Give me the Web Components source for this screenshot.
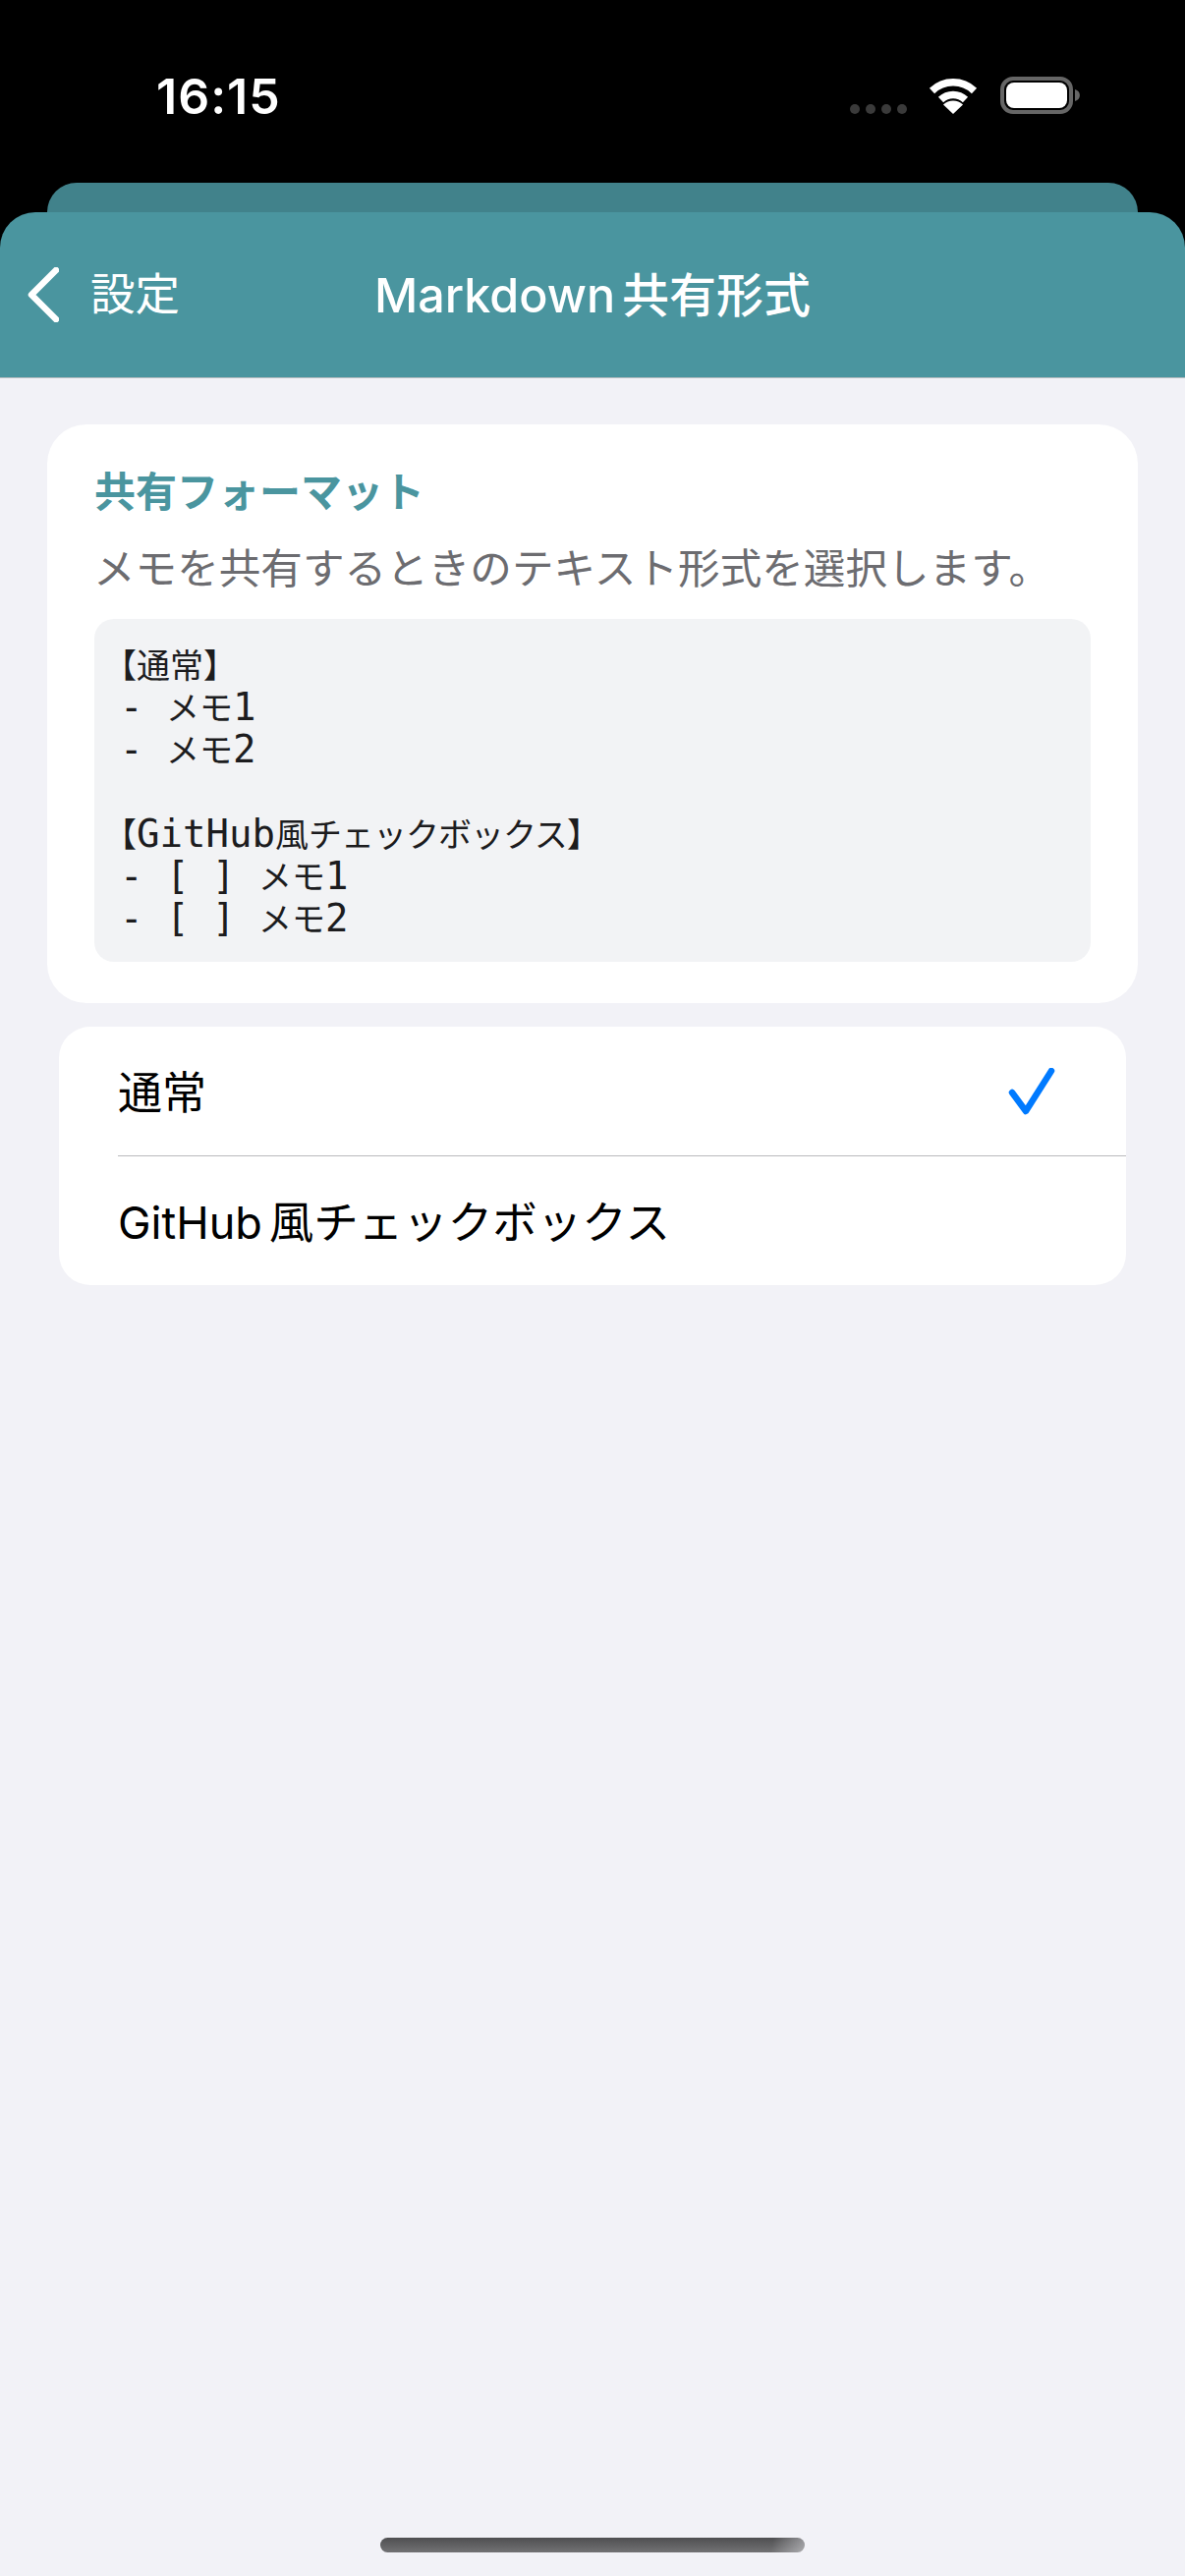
<!DOCTYPE html>
<html lang="ja">
<head>
<meta charset="utf-8">
<title>Markdown共有形式</title>
<style>
  html, body { margin: 0; padding: 0; background: #000; }
  body { font-family: "Inter", "Noto Sans CJK JP", sans-serif; }
</style>
</head>
<body>
<app-screen>
  <status-bar time="16:15"></status-bar>
  <nav-header back="設定" title="Markdown" suffix="共有形式"></nav-header>
  <format-card heading="共有フォーマット" note="メモを共有するときのテキスト形式を選択します。"></format-card>
  <option-list>
    <option-row label="通常" checked></option-row>
    <option-row label="GitHub" suffix="風チェックボックス"></option-row>
  </option-list>
</app-screen>

<script>
class AppScreen extends HTMLElement {
  constructor() {
    super();
    this.attachShadow({ mode: "open" });
    this.shadowRoot.innerHTML = `
      <style>
        :host { display: flex; flex-direction: column; width: 1206px; height: 2622px; background: #000; overflow: hidden; }
        .content { flex: 1; display: flex; flex-direction: column; background: #f2f2f7; }
        .main { flex: 1; }
        .home { align-self: center; width: 432px; height: 15px; margin-bottom: 24px; border-radius: 8px;
          background: linear-gradient(100deg, transparent 92%, rgba(242,242,247,.45) 100%), linear-gradient(#4f4f51, #727274); }
      </style>
      <slot name="top"></slot>
      <div class="content">
        <div class="main"><slot></slot></div>
        <div class="home"></div>
      </div>
    `;
  }

  connectedCallback() {
    [...this.children].forEach((el) => {
      if (el.localName === "status-bar" || el.localName === "nav-header") el.slot = "top";
    });
  }
}

class StatusBar extends HTMLElement {
  constructor() {
    super();
    this.attachShadow({ mode: "open" });
  }

  connectedCallback() {
    this.shadowRoot.innerHTML = `
      <style>
        :host { display: block; height: 186px; }
        .bar { display: flex; align-items: flex-start; height: 100%; padding: 0 106px 0 159px; }
        .time { font: 600 50px/58px "Inter", sans-serif; color: #fff; margin-top: 69px; letter-spacing: 1px; }
        .right { display: flex; align-items: flex-start; margin-left: auto; margin-top: 78px; }
        .dots { display: flex; gap: 6px; margin-top: 28px; margin-right: 22px; }
        .dots i { width: 10px; height: 10px; border-radius: 50%; background: #3a3a3a; }
        svg { display: block; }
        .wifi { margin-right: 23px; }
      </style>
      <div class="bar">
        <span class="time">${this.getAttribute("time")}</span>
        <div class="right">
          <div class="dots"><i></i><i></i><i></i><i></i></div>
          <svg class="wifi" width="50" height="38" viewBox="0 0 50 38">
            <path d="M3.5 14.5a31 31 0 0 1 43 0" fill="none" stroke="#fff" stroke-width="7.5"/>
            <path d="M12.5 23.5a18 18 0 0 1 25 0" fill="none" stroke="#fff" stroke-width="7.5"/>
            <path d="M25 38 L15 28.5a14.5 14.5 0 0 1 20 0Z" fill="#fff"/>
          </svg>
          <svg width="82" height="38" viewBox="0 0 82 38">
            <rect x="2" y="2" width="70" height="34" rx="11" fill="none" stroke="#666" stroke-width="4"/>
            <rect x="6" y="6" width="62" height="26" rx="8" fill="#fff"/>
            <path d="M76 13a8 6.500 0 0 1 0 12Z" fill="#666"/>
          </svg>
        </div>
      </div>
    `;
  }
}

class NavHeader extends HTMLElement {
  constructor() {
    super();
    this.attachShadow({ mode: "open" });
  }

  connectedCallback() {
    this.shadowRoot.innerHTML = `
      <style>
        :host { display: block; color: #fff; }
        .sheet { height: 30px; margin: 0 48px; background: #41828b; border-radius: 34px 34px 0 0; }
        .nav { position: relative; display: flex; align-items: center; justify-content: center; height: 168px;
          background: #4a959f; border-radius: 36px 36px 0 0; border-bottom: 1px solid #b4bcbf; }
        .back { position: absolute; top: 56px; left: 28px; display: flex; align-items: center; gap: 32px; font-size: 45.500px; line-height: 56px; }
        .title { font-size: 48.500px; font-weight: 500; line-height: 56px; margin-top: 2px; white-space: nowrap; }
        .title span { margin-left: 7px; font-size: 48px; }
        svg { display: block; }
      </style>
      <div class="sheet"></div>
      <div class="nav">
        <div class="back">
          <svg width="32" height="56" viewBox="0 0 32 56"><path d="M29 3 L4 28 L29 53" fill="none" stroke="#fff" stroke-width="6.500" stroke-linecap="round" stroke-linejoin="round"/></svg>
          <span>${this.getAttribute("back")}</span>
        </div>
        <div class="title">${this.getAttribute("title")}<span>${this.getAttribute("suffix")}</span></div>
      </div>
    `;
  }
}

class FormatCard extends HTMLElement {
  constructor() {
    super();
    this.attachShadow({ mode: "open" });
  }

  connectedCallback() {
    // kana and kanji run narrower than the latin cell in the reference, so they get their own spans
    const lines = [
      `<i class="open">【</i><i>通常】</i>`,
      `- <i>メモ</i>1`,
      `- <i>メモ</i>2`,
      ` `,
      `<i class="open">【</i>GitHub<i>風</i><i class="tight">チェックボックス</i><i>】</i>`,
      `- [ ] <i>メモ</i>1`,
      `- [ ] <i>メモ</i>2`,
    ];
    this.shadowRoot.innerHTML = `
      <style>
        :host { display: block; margin: 47px 48px 0; padding: 44px 48px 42px; background: #fff; border-radius: 40px; }
        h2 { margin: 0; font-size: 42px; font-weight: 700; line-height: 50px; color: #4a959f; }
        p { margin: 28px 0 26px -1px; font-size: 42.600px; line-height: 50px; color: #6c6c70; white-space: nowrap; }
        .code { padding: 24px 26px; background: #f2f3f5; border-radius: 20px; color: #1c1c1e;
          font: 39px/43px "DejaVu Sans Mono", "Noto Sans CJK JP", monospace; }
        .code div { height: 43px; white-space: pre; }
        i { font-style: normal; font-family: "Noto Sans CJK JP", sans-serif; font-size: 34px; }
        i.open { margin-left: -17px; }
        i.tight { letter-spacing: -1px; }
      </style>
      <h2>${this.getAttribute("heading")}</h2>
      <p>${this.getAttribute("note")}</p>
      <div class="code">${lines.map((l) => `<div>${l}</div>`).join("")}</div>
    `;
  }
}

class OptionList extends HTMLElement {
  constructor() {
    super();
    this.attachShadow({ mode: "open" });
    this.shadowRoot.innerHTML = `
      <style>
        :host { display: block; margin: 24px 60px 0; background: #fff; border-radius: 32px; overflow: hidden; }
        ::slotted(option-row:not(:last-child)) { border-bottom: 1px solid #b9b9bc; }
      </style>
      <slot></slot>
    `;
  }
}

class OptionRow extends HTMLElement {
  constructor() {
    super();
    this.attachShadow({ mode: "open" });
  }

  connectedCallback() {
    const check = this.hasAttribute("checked")
      ? `<svg width="48" height="48" viewBox="0 0 48 48"><path d="M4 25 L18 44 L44 3" fill="none" stroke="#007aff" stroke-width="6.500" stroke-linecap="round" stroke-linejoin="round"/></svg>`
      : "";
    const suffix = this.getAttribute("suffix");
    this.shadowRoot.innerHTML = `
      <style>
        :host { display: block; margin-left: 60px; }
        .row { display: flex; align-items: center; justify-content: space-between; height: 131px; padding-right: 72px; font-size: 45px; color: #000; }
        .label { margin-top: -3px; }
        .label span { margin-left: 7px; font-size: 45.500px; }
        svg { display: block; }
      </style>
      <div class="row"><div class="label">${this.getAttribute("label")}${suffix ? `<span>${suffix}</span>` : ""}</div>${check}</div>
    `;
  }
}

customElements.define("app-screen", AppScreen);
customElements.define("status-bar", StatusBar);
customElements.define("nav-header", NavHeader);
customElements.define("format-card", FormatCard);
customElements.define("option-list", OptionList);
customElements.define("option-row", OptionRow);
</script>
</body>
</html>
